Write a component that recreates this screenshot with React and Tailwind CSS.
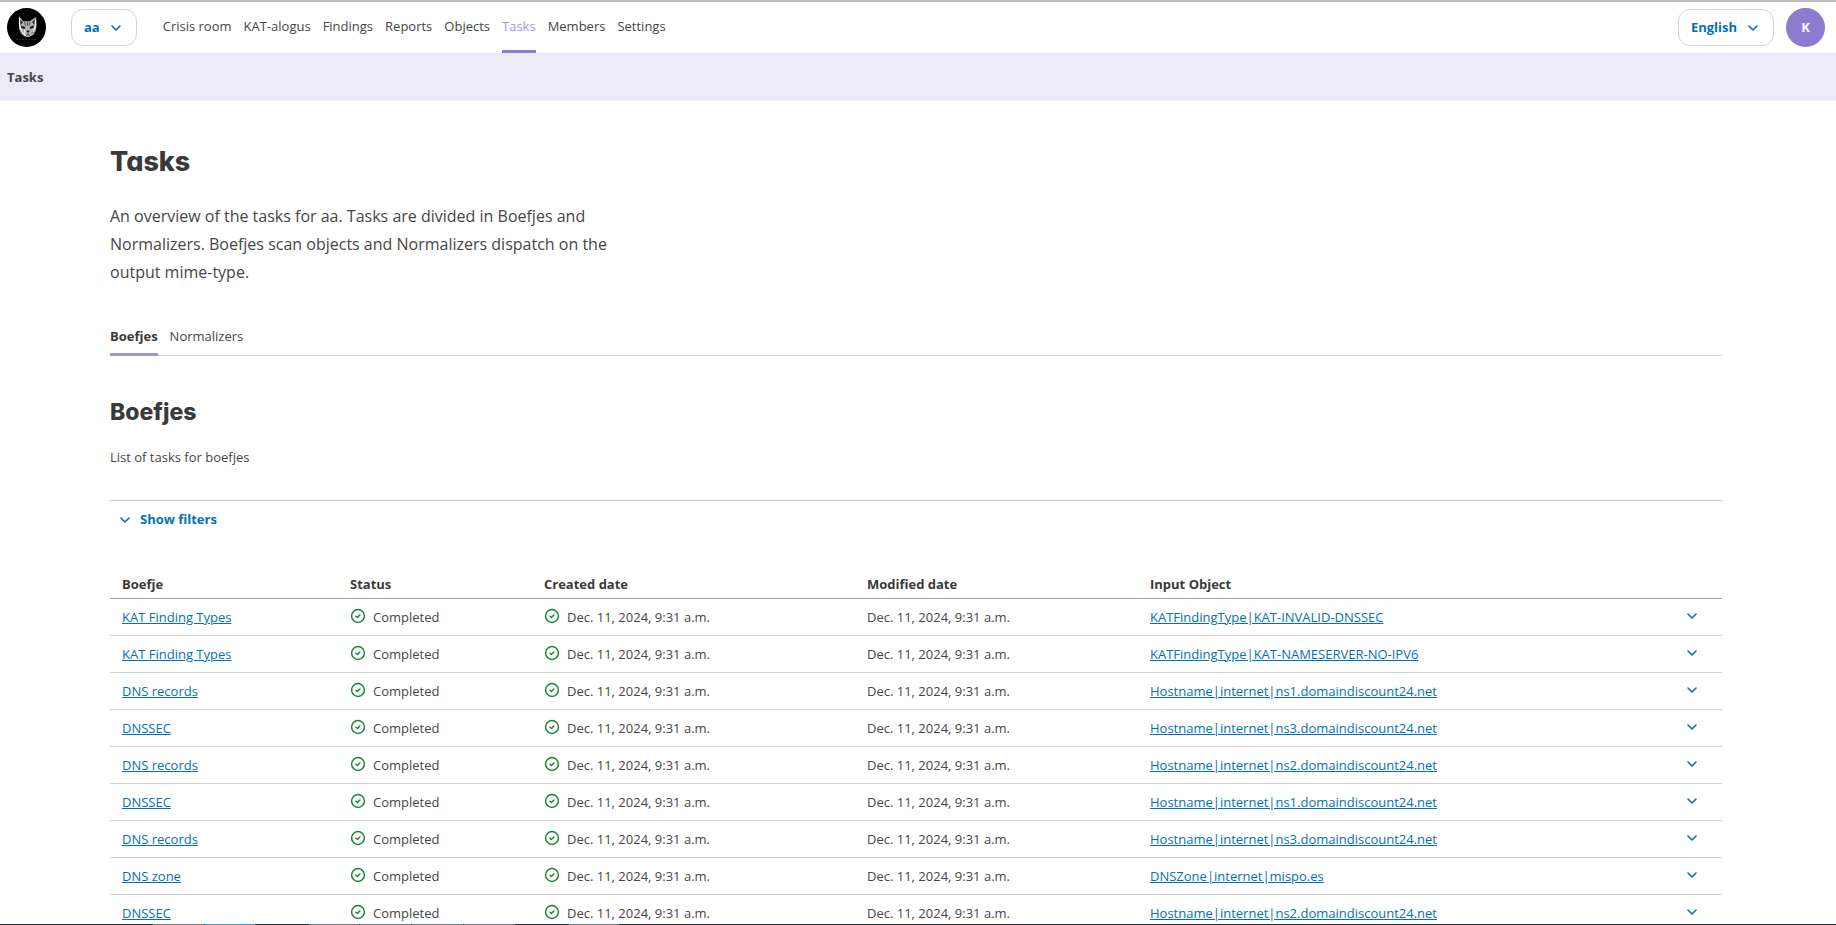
import React from "react";

const navItems = ["Crisis room", "KAT-alogus", "Findings", "Reports", "Objects", "Tasks", "Members", "Settings"];

const DATE = "Dec. 11, 2024, 9:31 a.m.";

const tasks = [
  ["KAT Finding Types", "KATFindingType|KAT-INVALID-DNSSEC"],
  ["KAT Finding Types", "KATFindingType|KAT-NAMESERVER-NO-IPV6"],
  ["DNS records", "Hostname|internet|ns1.domaindiscount24.net"],
  ["DNSSEC", "Hostname|internet|ns3.domaindiscount24.net"],
  ["DNS records", "Hostname|internet|ns2.domaindiscount24.net"],
  ["DNSSEC", "Hostname|internet|ns1.domaindiscount24.net"],
  ["DNS records", "Hostname|internet|ns3.domaindiscount24.net"],
  ["DNS zone", "DNSZone|internet|mispo.es"],
  ["DNSSEC", "Hostname|internet|ns2.domaindiscount24.net"],
];

function Chevron() {
  return (
    <svg width="10" height="6" viewBox="0 0 10 6" fill="none" stroke="currentColor" strokeWidth="1.6" strokeLinecap="round" strokeLinejoin="round" aria-hidden="true">
      <path d="M1 1l4 4 4-4" />
    </svg>
  );
}

function CheckIcon() {
  return (
    <svg className="mb-1 shrink-0 text-[#1d8637]" width="16" height="16" viewBox="0 0 16 16" fill="none" stroke="currentColor" strokeWidth="1.5" strokeLinecap="round" strokeLinejoin="round" aria-hidden="true">
      <circle cx="8" cy="8" r="6.4" />
      <path d="M6 8.300l1.400 1.200 2.500-2.500" />
    </svg>
  );
}

function CatLogo() {
  return (
    <svg width="39" height="39" viewBox="0 0 39 39" role="img" aria-label="OpenKAT">
      <circle cx="19.5" cy="19.5" r="19.5" fill="#000" />
      <path d="M12 8l4 5.200 7-.2L29 9l.6 8-.9 6-2.500 4-4.200 2-4.500-.6-3.500-2.900-2-5z" fill="#b4b4b4" />
      <path d="M13 11.500l3 3-2.300 2.500zM28 11.500l-3 2.500 2.300 3z" fill="#2b2b2b" />
      <path d="M14 17.500l4.500 1.800-1 1.800-3-1zM27 17.300l-4.500 2 1 1.800 3-1.500z" fill="#111" />
      <path d="M17.500 13.500l1.200 4.500M20.500 13.200v4.300M23 13.500l-1 4.500" stroke="#444" strokeWidth=".9" />
      <path d="M19 22.500h4l-2 2.300z" fill="#111" />
      <path d="M21 24.500v2l-2 1M21 26.500l2 1" stroke="#333" strokeWidth=".8" fill="none" />
      <path d="M12.500 22.500l3.500 1M13 25l3-.5M28.500 22.500l-3.500 1M27.500 25l-3-.5" stroke="#555" strokeWidth=".7" />
      <path d="M12.500 10v7l1.500 5 2.500 4M28.700 12l-.7 8-2 4M18 21.500l-1 4.500 2 2" stroke="#fafafa" strokeWidth="1" fill="none" />
      <path d="M9 27l3-1M9 31.500h21M30 26l2 .5" stroke="#333" strokeWidth=".8" strokeDasharray="2 1" />
    </svg>
  );
}

const pill = "flex h-[37px] items-center gap-[11px] rounded-xl border border-[#d4d4d4] bg-white pr-[15px] pl-3 text-[13px] font-bold text-[#0371b8]";
const link = "text-[#0371b8] underline underline-offset-1";
const heading = "font-['Inter',sans-serif] font-extrabold text-[#3a3a3a] [font-feature-settings:'cv11']";
const cell = "px-3 pt-[2px]";

function BottomStrip() {
  return (
    <div className="flex h-px shrink-0 gap-px bg-[#26323a] pl-[153px]">
      <div className="w-[51px] bg-[#7b8185]" />
      <div className="w-[50px] bg-[#3fa0dc]" />
      <div className="w-[52px]" />
      <div className="w-[50px] bg-[#7b8185]" />
      <div className="w-[51px] bg-[#7b8185]" />
      <div className="w-[51px] bg-[#7b8185]" />
      <div className="w-[51px] bg-[#7b8185]" />
      <div className="w-[52px]" />
      <div className="w-[50px] bg-[#7b8185]" />
    </div>
  );
}

export default function App() {
  return (
    <div className="flex h-screen flex-col overflow-hidden bg-white font-['Open_Sans','Noto_Sans',sans-serif] text-[13px] text-[#464646]">
      <header className="flex h-[53px] shrink-0 items-stretch border-t-2 border-[#bdbdbd] bg-white pr-[11px] pl-[7px]">
        <a href="#home" className="flex items-center">
          <CatLogo />
        </a>
        <div className="ml-[25px] flex items-center">
          <button type="button" className={pill}>
            aa
            <Chevron />
          </button>
        </div>
        <nav className="ml-[26px] flex gap-3">
          {navItems.map((item) => (
            <a
              key={item}
              href={"#" + item.toLowerCase().replace(" ", "-")}
              className={
                item === "Tasks"
                  ? "flex items-center border-b-3 border-[#8d7bd1] pt-[2px] text-[#a594dc]"
                  : "flex items-center pt-[2px] pb-[3px]"
              }
            >
              {item}
            </a>
          ))}
        </nav>
        <div className="ml-auto flex items-center gap-3">
          <button type="button" className={pill}>
            English
            <Chevron />
          </button>
          <button type="button" className="flex size-[39px] items-center justify-center rounded-full bg-[#8d7bd1] font-bold text-white">
            K
          </button>
        </div>
      </header>

      <div className="flex h-12 shrink-0 items-center bg-[#edebf8] px-[7px] pt-[2px] font-bold">Tasks</div>

      <main className="min-h-0 flex-1 overflow-hidden pt-[43px] pr-[114px] pl-[110px]">
        <h1 className={heading + " text-[27px] leading-9"}>Tasks</h1>
        <p className="mt-[22px] max-w-[520px] text-base leading-7">
          An overview of the tasks for aa. Tasks are divided in Boefjes and Normalizers. Boefjes scan objects and Normalizers dispatch on the output mime-type.
        </p>

        <div className="mt-8 flex h-[38px] gap-3 border-b border-[#cfd2d2]">
          <a href="#boefjes" className="-mb-px flex items-center border-b-3 border-[#a594dc] pt-[2px] font-bold text-[#3a3a3a]">
            Boefjes
          </a>
          <a href="#normalizers" className="flex items-center pt-[2px] pb-[2px]">
            Normalizers
          </a>
        </div>

        <h2 className={heading + " mt-10 text-[23px] leading-8"}>Boefjes</h2>
        <p className="mt-[19px] leading-5">List of tasks for boefjes</p>

        <div className="mt-[33px] border-t border-[#cccccc]">
          <button type="button" className="flex h-9 items-center gap-[10px] pt-[2px] pl-[10px] font-bold text-[#0371b8]">
            <Chevron />
            Show filters
          </button>
        </div>

        <table className="mt-8 w-full table-fixed border-collapse text-left">
          <colgroup>
            <col className="w-[228px]" />
            <col className="w-[194px]" />
            <col className="w-[323px]" />
            <col className="w-[283px]" />
            <col />
            <col className="w-16" />
          </colgroup>
          <thead>
            <tr className="h-[29px] border-b border-[#a594dc] text-[#3a3a3a]">
              {["Boefje", "Status", "Created date", "Modified date", "Input Object"].map((h) => (
                <th key={h} scope="col" className={cell + " font-bold"}>
                  {h}
                </th>
              ))}
              <td />
            </tr>
          </thead>
          <tbody>
            {tasks.map(([name, object], i) => (
              <tr key={i} className="h-[37px] border-b border-[#cfcfcf]">
                <td className={cell}>
                  <a href="#boefje" className={link}>
                    {name}
                  </a>
                </td>
                <td className={cell}>
                  <span className="flex items-center gap-[7px]">
                    <CheckIcon />
                    Completed
                  </span>
                </td>
                <td className={cell}>
                  <span className="flex items-center gap-[7px]">
                    <CheckIcon />
                    {DATE}
                  </span>
                </td>
                <td className={cell}>{DATE}</td>
                <td className={cell}>
                  <a href="#object" className={link}>
                    {object}
                  </a>
                </td>
                <td className="pt-[2px] pr-[25px]">
                  <button type="button" aria-label="Show details" className="ml-auto block pb-1 text-[#0371b8]">
                    <Chevron />
                  </button>
                </td>
              </tr>
            ))}
          </tbody>
        </table>
      </main>
      <BottomStrip />
    </div>
  );
}
